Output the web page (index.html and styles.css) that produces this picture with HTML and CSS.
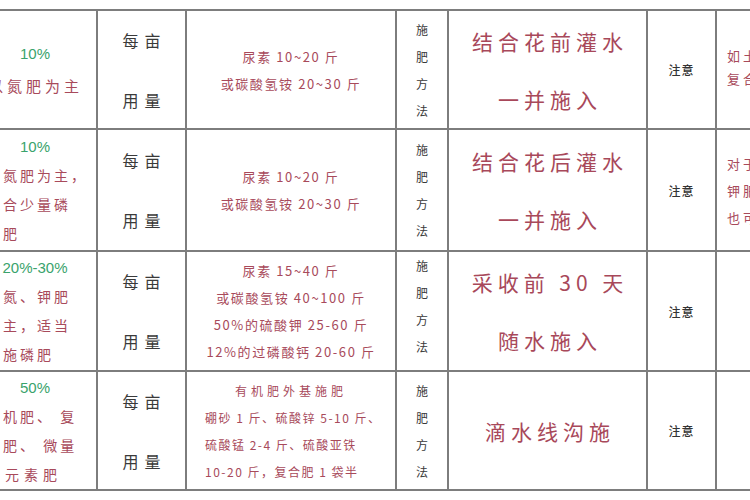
FILE: index.html
```html
<!DOCTYPE html>
<html lang="zh">
<head>
<meta charset="utf-8">
<link rel="stylesheet" href="styles.css">
</head>
<body>
<div class="sheet">
  <div class="grid">
    <!-- row 1 -->
    <div class="cell c1 r1">
      <div class="pct">10%</div>
      <div class="note one">以氮肥为主</div>
    </div>
    <div class="cell c2"><div>每亩</div><div>用量</div></div>
    <div class="cell c3"><div>尿素 10~20 斤</div><div>或碳酸氢铵 20~30 斤</div></div>
    <div class="cell c4"><div>施</div><div>肥</div><div>方</div><div>法</div></div>
    <div class="cell c5"><div>结合花前灌水</div><div>一并施入</div></div>
    <div class="cell c6">注意</div>
    <div class="cell c7 tight"><div>如土壤缺硼</div><div>复合肥减量</div></div>

    <!-- row 2 -->
    <div class="cell c1">
      <div class="pct">10%</div>
      <div class="note"><div>以氮肥为主，</div><div>配合少量磷</div><div>钾肥</div></div>
    </div>
    <div class="cell c2"><div>每亩</div><div>用量</div></div>
    <div class="cell c3"><div>尿素 10~20 斤</div><div>或碳酸氢铵 20~30 斤</div></div>
    <div class="cell c4"><div>施</div><div>肥</div><div>方</div><div>法</div></div>
    <div class="cell c5"><div>结合花后灌水</div><div>一并施入</div></div>
    <div class="cell c6">注意</div>
    <div class="cell c7"><div>对于缺钾土壤</div><div>钾肥用量可</div><div>也可增加</div></div>

    <!-- row 3 -->
    <div class="cell c1">
      <div class="pct">20%-30%</div>
      <div class="note"><div>以氮、钾肥</div><div>为主，适当</div><div>配施磷肥</div></div>
    </div>
    <div class="cell c2"><div>每亩</div><div>用量</div></div>
    <div class="cell c3"><div>尿素 15~40 斤</div><div>或碳酸氢铵 40~100 斤</div><div>50%的硫酸钾 25-60 斤</div><div>12%的过磷酸钙 20-60 斤</div></div>
    <div class="cell c4 up"><div>施</div><div>肥</div><div>方</div><div>法</div></div>
    <div class="cell c5"><div>采收前 30 天</div><div>随水施入</div></div>
    <div class="cell c6">注意</div>
    <div class="cell c7"></div>

    <!-- row 4 -->
    <div class="cell c1">
      <div class="pct">50%</div>
      <div class="note"><div>有机肥、 复</div><div>合肥、 微量</div><div class="ind">元素肥</div></div>
    </div>
    <div class="cell c2"><div>每亩</div><div>用量</div></div>
    <div class="cell c3 mixed">
      <div class="center">有机肥外基施肥</div>
      <div>硼砂 1 斤、硫酸锌 5-10 斤、</div>
      <div>硫酸锰 2-4 斤、硫酸亚铁</div>
      <div>10-20 斤，复合肥 1 袋半</div>
    </div>
    <div class="cell c4"><div>施</div><div>肥</div><div>方</div><div>法</div></div>
    <div class="cell c5"><div>滴水线沟施</div></div>
    <div class="cell c6">注意</div>
    <div class="cell c7"></div>
  </div>
</div>
</body>
</html>
```

FILE: styles.css
```css
html, body {
  margin: 0;
  padding: 0;
  width: 750px;
  height: 500px;
  overflow: hidden;
  background: #ffffff;
}

body {
  font-family: "Noto Sans CJK SC", "Noto Sans", sans-serif;
}

.sheet {
  padding-top: 9px;
  margin-left: -32px;
}

.grid {
  display: grid;
  grid-template-columns: 126px 87px 208px 50px 197px 67px 133px;
  grid-template-rows: 117px 120px 118px 117px;
  gap: 2px;
  padding: 2px;
  background: #7d7d7d;
  width: max-content;
}

.cell {
  background: #ffffff;
  display: flex;
  flex-direction: column;
  align-items: center;
  justify-content: center;
  overflow: hidden;
}

/* column 1 */
.c1 {
  align-items: flex-start;
  padding-left: 16px;
}
.c1 .pct {
  width: 98px;
  text-align: center;
  color: #3aa36c;
  font-size: 15px;
  line-height: 29px;
  font-family: "Liberation Sans", "Noto Sans", sans-serif;
}
.c1 .note {
  color: #a84a5b;
  font-size: 14px;
  letter-spacing: 3px;
  line-height: 29px;
  white-space: nowrap;
}
.c1.r1 .pct { line-height: 32px; }
.c1 .note.one {
  line-height: 32px;
  padding-left: 2px;
  font-size: 15px;
  letter-spacing: 4px;
}
.c1 .note .ind { padding-left: 19px; letter-spacing: 5px; }

/* column 2 */
.c2 {
  color: #3a3a3a;
  font-size: 16px;
  letter-spacing: 6px;
  line-height: 30px;
  gap: 30px;
  padding-left: 6px;
}

/* column 3 */
.c3 {
  color: #a84a5b;
  font-size: 13px;
  letter-spacing: 1.6px;
  line-height: 27px;
  white-space: nowrap;
}
.c3.mixed {
  align-items: flex-start;
  padding-left: 18px;
  font-size: 12px;
  letter-spacing: 1.5px;
}
.c3.mixed .center {
  align-self: center;
  padding-right: 18px;
  letter-spacing: 4px;
}

/* column 4 */
.c4 {
  color: #3a3a3a;
  font-size: 12px;
  line-height: 27px;
}
.c4.up { justify-content: flex-start; }

/* column 5 */
.c5 {
  color: #a8485a;
  font-size: 21px;
  letter-spacing: 5px;
  line-height: 58px;
  white-space: nowrap;
  padding-left: 5px;
}

/* column 6 */
.c6 {
  color: #333333;
  font-size: 12px;
  font-weight: 500;
  letter-spacing: 1px;
}

/* column 7 */
.c7 {
  align-items: flex-start;
  padding-left: 10px;
  color: #a84a5b;
  font-size: 13px;
  letter-spacing: 3px;
  line-height: 27px;
  white-space: nowrap;
}
.c7.tight { line-height: 23px; padding-bottom: 6px; }
```
